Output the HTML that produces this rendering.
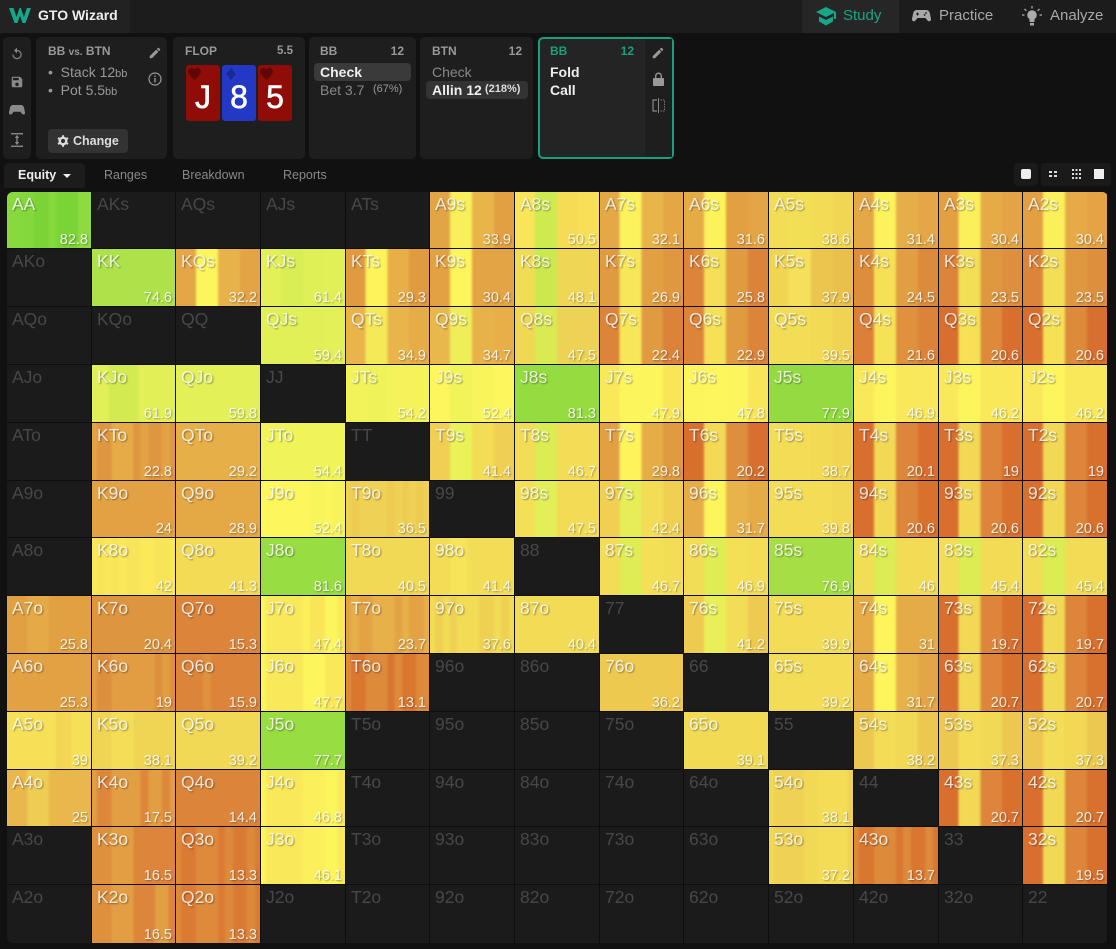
<!DOCTYPE html>
<html lang="en"><head><meta charset="utf-8"><title>GTO Wizard</title>
<style>
*{box-sizing:border-box}
html,body{margin:0;padding:0;background:#111;width:1116px;height:949px;overflow:hidden;font-family:"Liberation Sans",sans-serif}
.a{position:absolute}
.top{left:0;top:0;width:1116px;height:33px;background:#1c1c1c}
.p{position:absolute;top:37px;height:122px;background:#1e1e1e;border-radius:5px}
.t{position:absolute;white-space:nowrap;line-height:16px}
.h{font-size:12px;font-weight:bold;color:#999}
.g{display:grid;position:absolute;left:7px;top:192px;width:1101px;height:751px;background:#0e0e0e;border-radius:6px;overflow:hidden;gap:1px;
grid-template-columns:84px 83px 84px 84px 83px 84px 84px 83px 84px 84px 84px 83px 84px;
grid-template-rows:56px 57px 57px 57px 57px 56px 57px 57px 57px 57px 56px 57px 58px}
.g>div{position:relative;overflow:hidden}
.d{background:#1b1b1b;color:#474747;font-size:17.5px;line-height:18px;padding:3px 0 0 5px}
.c::before{content:"";position:absolute;inset:-2px;background:inherit;filter:blur(1px)}
.c span{position:absolute;left:5px;top:3px;font-size:17.5px;line-height:18px;color:rgba(255,255,255,.82);text-shadow:1px 1px 1.500px rgba(0,0,0,.38)}
.c em{position:absolute;right:3px;bottom:1.5px;font-style:normal;font-size:14.5px;line-height:14px;color:rgba(255,255,255,.86);text-shadow:1px 1px 1.500px rgba(0,0,0,.32)}
.s{background:linear-gradient(90deg,var(--a) 25%,var(--b) 25% 50%,var(--c) 50% 75%,var(--d) 75%)}
svg{position:absolute;display:block}
</style></head><body>
<div class="a top"></div>
<div class="a" style="left:0;top:0;width:130px;height:33px;background:#222"></div>
<svg style="left:9px;top:7px" width="22" height="17" viewBox="0 0 22 17"><path d="M0 1h4.500l3 9 3-9h1.400l3 9 3-9H22l-5.500 15h-3L11 8.500 8.500 16h-3z" fill="#17a688"/></svg>
<div class="t" style="left:38px;top:7px;font-size:14px;font-weight:bold;color:#eee">GTO Wizard</div>
<div class="a" style="left:802px;top:0;width:97px;height:33px;background:#262626"></div>
<svg style="left:815px;top:6px" width="22" height="21" viewBox="0 0 22 21"><path d="M11 1 1 6l10 5 8-4v6h2V6zM4 10.500v5l7 4 7-4v-5l-7 3.500z" fill="#17a688"/></svg>
<div class="t" style="left:843px;top:8px;font-size:15px;color:#17a688">Study</div>
<svg style="left:912px;top:7px" width="19" height="18" viewBox="0 0 19 18"><path d="M5 3h9c2.500 0 3.500 1.500 4 4l1 5c.3 2-2 3.200-3.500 1.500L13.500 11h-8L3.500 13.500C2 15.200-.3 14 0 12l1-5c.5-2.500 1.500-4 4-4z" fill="#a8a8a8"/><path d="M4 6.500h3v1H4zM5 5.500h1v3H5z" fill="#1c1c1c"/><circle cx="14" cy="6" r=".9" fill="#1c1c1c"/><circle cx="12.500" cy="8" r=".9" fill="#1c1c1c"/></svg>
<div class="t" style="left:939px;top:8px;font-size:15px;color:#a8a8a8">Practice</div>
<svg style="left:1022px;top:6px" width="20" height="22" viewBox="0 0 20 22"><circle cx="10" cy="9" r="4.800" fill="#aaa"/><path d="M7.500 13h5v3h-5zM8 17h4v2.500H8z" fill="#aaa"/><path d="M10 0v2.500M2.500 3l1.800 1.800M17.500 3l-1.800 1.800M0 9h2.500M17.500 9H20" stroke="#aaa" stroke-width="1.300"/></svg>
<div class="t" style="left:1050px;top:8px;font-size:15px;color:#a8a8a8">Analyze</div>

<div class="p" style="left:3px;width:28px"></div>
<svg style="left:10px;top:47px" width="14" height="14" viewBox="0 0 24 24"><path d="M12 5V1L7 6l5 5V7a6 6 0 1 1-6 6H4a8 8 0 1 0 8-8z" fill="#8a8a8a"/></svg>
<svg style="left:10px;top:75px" width="14" height="14" viewBox="0 0 24 24"><path d="M17 3H5a2 2 0 0 0-2 2v14a2 2 0 0 0 2 2h14a2 2 0 0 0 2-2V7zm-5 16a3 3 0 1 1 0-6 3 3 0 0 1 0 6zm3-10H5V5h10z" fill="#8a8a8a"/></svg>
<svg style="left:9px;top:104px" width="16" height="13" viewBox="0 0 19 15"><path d="M5 1h9c2.500 0 3.500 1.500 4 4l1 5c.3 2-2 3.200-3.500 1.500L13.500 9h-8L3.500 11.500C2 13.200-.3 12 0 10l1-5c.5-2.500 1.500-4 4-4z" fill="#8a8a8a"/></svg>
<svg style="left:10px;top:133px" width="14" height="14" viewBox="0 0 14 14"><path d="M1 .7h12M1 13.300h12M7 2.500v9" stroke="#8a8a8a" stroke-width="1.300" fill="none"/><path d="M7 2 4.800 5h4.400zM7 12 4.800 9h4.400z" fill="#8a8a8a"/></svg>

<div class="p" style="left:36px;width:131px"></div>
<div class="t h" style="left:48px;top:43px">BB <span style="font-size:10px">vs.</span> BTN</div>
<div class="t" style="left:48px;top:64px;font-size:14px;color:#999">•&nbsp; Stack 12<span style="font-size:11px">bb</span></div>
<div class="t" style="left:48px;top:82px;font-size:14px;color:#999">•&nbsp; Pot 5.5<span style="font-size:11px">bb</span></div>
<svg style="left:148px;top:46px" width="14" height="14" viewBox="0 0 24 24"><path d="M3 17.250V21h3.750L17.810 9.940l-3.750-3.750L3 17.250zM20.710 7.040a1 1 0 0 0 0-1.410l-2.340-2.340a1 1 0 0 0-1.410 0l-1.830 1.830 3.750 3.750 1.830-1.830z" fill="#999"/></svg>
<svg style="left:148px;top:72px" width="14" height="14" viewBox="0 0 14 14"><circle cx="7" cy="7" r="6" fill="none" stroke="#999" stroke-width="1.200"/><path d="M6.300 6h1.400v4.500H6.300zM6.300 3.500h1.400v1.400H6.300z" fill="#999"/></svg>
<div class="a" style="left:48px;top:129px;width:80px;height:24px;background:#333;border-radius:4px"></div>
<svg style="left:57px;top:135px" width="12" height="12" viewBox="0 0 12 12"><circle cx="6" cy="6" r="3.300" fill="none" stroke="#ddd" stroke-width="2.400"/><path d="M6 .3v2M6 9.700v2M1 3l1.700 1M9.300 8l1.700 1M1 9l1.700-1M9.300 4 11 3" stroke="#ddd" stroke-width="2"/></svg>
<div class="t" style="left:73px;top:133px;font-size:12.500px;font-weight:bold;color:#ddd">Change</div>

<div class="p" style="left:173px;width:132px"></div>
<div class="t h" style="left:185px;top:43px">FLOP</div>
<div class="t h" style="right:823px;top:43px;font-size:11.500px">5.5</div>
<div class="a" style="left:186px;top:65px;width:34px;height:56px;background:#8f0c07;border-radius:3px"></div>
<div class="a" style="left:222px;top:65px;width:34px;height:56px;background:#2338c4;border-radius:3px"></div>
<div class="a" style="left:258px;top:65px;width:34px;height:56px;background:#8f0c07;border-radius:3px"></div>
<svg style="left:188px;top:68px" width="13" height="12" viewBox="0 0 14 13"><path d="M7 13C3 9 0 6.500 0 3.500 0 1.500 1.500 0 3.500 0 5 0 6.300.8 7 2c.7-1.200 2-2 3.500-2C12.500 0 14 1.500 14 3.500 14 6.500 11 9 7 13z" fill="#5d0805"/></svg>
<svg style="left:226px;top:68px" width="10" height="12" viewBox="0 0 11 14"><path d="M5.500 0 11 7l-5.500 7L0 7z" fill="#18298f"/></svg>
<svg style="left:260px;top:68px" width="13" height="12" viewBox="0 0 14 13"><path d="M7 13C3 9 0 6.500 0 3.500 0 1.500 1.500 0 3.500 0 5 0 6.300.8 7 2c.7-1.200 2-2 3.500-2C12.500 0 14 1.500 14 3.500 14 6.500 11 9 7 13z" fill="#5d0805"/></svg>
<div class="t" style="left:186px;top:79px;width:34px;text-align:center;font-size:32px;line-height:36px;color:#fff;-webkit-text-stroke:.6px #fff">J</div>
<div class="t" style="left:222px;top:79px;width:34px;text-align:center;font-size:32px;line-height:36px;color:#fff;-webkit-text-stroke:.6px #fff">8</div>
<div class="t" style="left:258px;top:79px;width:34px;text-align:center;font-size:32px;line-height:36px;color:#fff;-webkit-text-stroke:.6px #fff">5</div>

<div class="p" style="left:309px;width:107px"></div>
<div class="t h" style="left:320px;top:43px">BB</div>
<div class="t h" style="right:712px;top:43px">12</div>
<div class="a" style="left:314px;top:63px;width:97px;height:18px;background:#3a3a3a;border-radius:4px"></div>
<div class="t" style="left:320px;top:64px;font-size:14px;font-weight:bold;color:#eee">Check</div>
<div class="t" style="left:320px;top:82px;font-size:14px;color:#888">Bet 3.7</div>
<div class="t" style="left:373px;top:81px;font-size:11px;color:#999">(67%)</div>

<div class="p" style="left:420px;width:113px"></div>
<div class="t h" style="left:432px;top:43px">BTN</div>
<div class="t h" style="right:594px;top:43px">12</div>
<div class="t" style="left:432px;top:64px;font-size:14px;color:#888">Check</div>
<div class="a" style="left:426px;top:81px;width:102px;height:18px;background:#333;border-radius:4px"></div>
<div class="t" style="left:432px;top:82px;font-size:14px;font-weight:bold;color:#eee">Allin 12</div>
<div class="t" style="left:485px;top:81px;font-size:11px;font-weight:bold;color:#ddd">(218%)</div>

<div class="p" style="left:538px;width:136px;background:#242424;border:2px solid #17a07d"></div>
<div class="a" style="left:645px;top:39px;width:27px;height:118px;background:#1e1e1e"></div>
<div class="t h" style="left:550px;top:43px;color:#17a07d">BB</div>
<div class="t h" style="right:482px;top:43px;color:#17a07d">12</div>
<div class="t" style="left:550px;top:64px;font-size:14px;font-weight:bold;color:#eee">Fold</div>
<div class="t" style="left:550px;top:82px;font-size:14px;font-weight:bold;color:#eee">Call</div>
<svg style="left:651px;top:46px" width="14" height="14" viewBox="0 0 24 24"><path d="M3 17.250V21h3.750L17.810 9.940l-3.750-3.750L3 17.250zM20.710 7.040a1 1 0 0 0 0-1.410l-2.340-2.340a1 1 0 0 0-1.410 0l-1.830 1.830 3.750 3.750 1.830-1.830z" fill="#999"/></svg>
<svg style="left:653px;top:72px" width="11" height="14" viewBox="0 0 11 14"><path d="M1 6h9a1 1 0 0 1 1 1v6a1 1 0 0 1-1 1H1a1 1 0 0 1-1-1V7a1 1 0 0 1 1-1z" fill="#999"/><path d="M2.700 6V4a2.800 2.800 0 0 1 5.600 0v2" fill="none" stroke="#999" stroke-width="1.300"/></svg>
<svg style="left:652px;top:98px" width="13" height="15" viewBox="0 0 13 15"><path d="M5 2H1v11h4" fill="none" stroke="#888" stroke-width="1.200"/><path d="M6.500 0v15" stroke="#888"/><path d="M8.500 2h4v11h-4" fill="none" stroke="#777" stroke-dasharray="1.500 1"/></svg>

<div class="a" style="left:4px;top:163px;width:81px;height:25px;background:#1c1c1c;border-radius:5px 5px 0 0"></div>
<div class="t" style="left:18px;top:167px;font-size:12.500px;font-weight:bold;color:#eee">Equity</div>
<div class="a" style="left:63px;top:174px;border:4px solid transparent;border-top:4px solid #eee;border-bottom:0"></div>
<div class="t" style="left:104px;top:167px;font-size:12.500px;color:#888">Ranges</div>
<div class="t" style="left:182px;top:167px;font-size:12.500px;color:#888">Breakdown</div>
<div class="t" style="left:283px;top:167px;font-size:12.500px;color:#888">Reports</div>
<div class="a" style="left:1014px;top:163px;width:24px;height:23px;background:#1a1a1a;border-radius:4px"></div>
<div class="a" style="left:1041px;top:163px;width:70px;height:23px;background:#1a1a1a;border-radius:4px"></div>
<div class="a" style="left:1021px;top:169px;width:10px;height:10px;background:#eee;border-radius:2px"></div>
<svg style="left:1049px;top:170px" width="8" height="8" viewBox="0 0 8 8"><path d="M0 1h3v2H0zM5 1h3v2H5zM0 5h3v2H0zM5 5h3v2H5z" fill="#ddd"/></svg>
<svg style="left:1072px;top:169px" width="9" height="10" viewBox="0 0 9 10"><path d="M0 0h2v2H0zM3.500 0h2v2h-2zM7 0h2v2H7zM0 4h2v2H0zM3.500 4h2v2h-2zM7 4h2v2H7zM0 8h2v2H0zM3.500 8h2v2h-2zM7 8h2v2H7z" fill="#ddd"/></svg>
<div class="a" style="left:1094px;top:169px;width:10px;height:10px;background:#eee"></div>

<div class="g">
<div class="c" style="background:linear-gradient(90deg,#88d93e 16%,#84d83b 16% 33%,#7ad436 33% 50%,#88d93e 50% 58%,#7bd436 58% 83%,#8ddb40 83%)"><span>AA</span><em>82.8</em></div>
<div class="d">AKs</div><div class="d">AQs</div><div class="d">AJs</div><div class="d">ATs</div>
<div class="c s" style="--a:#e2a545;--b:#f8ef5a;--c:#e8b54a;--d:#e2a043"><span>A9s</span><em>33.9</em></div>
<div class="c s" style="--a:#f8e55a;--b:#cfea50;--c:#f6dc55;--d:#f7e057"><span>A8s</span><em>50.5</em></div>
<div class="c s" style="--a:#e4a946;--b:#fcf25b;--c:#e9b54b;--d:#e5a645"><span>A7s</span><em>32.1</em></div>
<div class="c s" style="--a:#e5ab47;--b:#fcf25b;--c:#e3a042;--d:#e4a645"><span>A6s</span><em>31.6</em></div>
<div class="c s" style="--a:#f3dd56;--b:#f3df56;--c:#f2dc55;--d:#f1d653"><span>A5s</span><em>38.6</em></div>
<div class="c s" style="--a:#e4a846;--b:#fcf25b;--c:#e6ae48;--d:#e4a646"><span>A4s</span><em>31.4</em></div>
<div class="c s" style="--a:#e2a043;--b:#fbf05a;--c:#e6ab47;--d:#e4a344"><span>A3s</span><em>30.4</em></div>
<div class="c s" style="--a:#e2a043;--b:#fbf05a;--c:#e6ab47;--d:#e4a344"><span>A2s</span><em>30.4</em></div>

<div class="d">AKo</div>
<div class="c" style="background:#aee24a"><span>KK</span><em>74.6</em></div>
<div class="c s" style="--a:#e4a646;--b:#fdf55c;--c:#e8b24a;--d:#e4a344"><span>KQs</span><em>32.2</em></div>
<div class="c s" style="--a:#e4f058;--b:#d9ee54;--c:#dff057;--d:#e2f057"><span>KJs</span><em>61.4</em></div>
<div class="c s" style="--a:#e09a40;--b:#fdf45b;--c:#e8ae48;--d:#e09a40"><span>KTs</span><em>29.3</em></div>
<div class="c s" style="--a:#e2a243;--b:#fdf55c;--c:#e3a443;--d:#e3a443"><span>K9s</span><em>30.4</em></div>
<div class="c s" style="--a:#f0dc55;--b:#cbe94f;--c:#efd755;--d:#efd755"><span>K8s</span><em>48.1</em></div>
<div class="c s" style="--a:#e09a40;--b:#f7e658;--c:#e3a043;--d:#df983f"><span>K7s</span><em>26.9</em></div>
<div class="c s" style="--a:#dc853a;--b:#f4df56;--c:#e09a40;--d:#db8338"><span>K6s</span><em>25.8</em></div>
<div class="c s" style="--a:#f0d553;--b:#f4e05a;--c:#ebc54e;--d:#eac04d"><span>K5s</span><em>37.9</em></div>
<div class="c s" style="--a:#dd8e3c;--b:#f6e056;--c:#e29e42;--d:#dc8a3b"><span>K4s</span><em>24.5</em></div>
<div class="c s" style="--a:#dc853a;--b:#f3df56;--c:#e09840;--d:#de8f3d"><span>K3s</span><em>23.5</em></div>
<div class="c s" style="--a:#dc853a;--b:#f3df56;--c:#e09840;--d:#de8f3d"><span>K2s</span><em>23.5</em></div>

<div class="d">AQo</div><div class="d">KQo</div><div class="d">QQ</div>
<div class="c s" style="--a:#e2f057;--b:#e0f057;--c:#e2ef56;--d:#e4f058"><span>QJs</span><em>59.4</em></div>
<div class="c s" style="--a:#e9b54b;--b:#f4ea58;--c:#e9b54b;--d:#e6ac47"><span>QTs</span><em>34.9</em></div>
<div class="c s" style="--a:#e9b84c;--b:#f0ee58;--c:#e8b24a;--d:#e8ae48"><span>Q9s</span><em>34.7</em></div>
<div class="c s" style="--a:#f0d754;--b:#d9ea52;--c:#edd253;--d:#edd253"><span>Q8s</span><em>47.5</em></div>
<div class="c s" style="--a:#dc853a;--b:#f7e658;--c:#e09a40;--d:#db8338"><span>Q7s</span><em>22.4</em></div>
<div class="c s" style="--a:#dc853a;--b:#f5e056;--c:#e09a40;--d:#dc843a"><span>Q6s</span><em>22.9</em></div>
<div class="c s" style="--a:#f3dc56;--b:#f3dc56;--c:#f2da55;--d:#f0d353"><span>Q5s</span><em>39.5</em></div>
<div class="c s" style="--a:#dc8039;--b:#f6e257;--c:#df913e;--d:#dc8339"><span>Q4s</span><em>21.6</em></div>
<div class="c s" style="--a:#d96f2e;--b:#f5e056;--c:#dd8a3b;--d:#d96f2e"><span>Q3s</span><em>20.6</em></div>
<div class="c s" style="--a:#d96f2e;--b:#f5e056;--c:#dd8a3b;--d:#d96f2e"><span>Q2s</span><em>20.6</em></div>

<div class="d">AJo</div>
<div class="c" style="background:linear-gradient(90deg,#e2f057 22%,#d3ea51 22% 55%,#e2ef56 55%)"><span>KJo</span><em>61.9</em></div>
<div class="c" style="background:#e3f058"><span>QJo</span><em>59.8</em></div>
<div class="d">JJ</div>
<div class="c s" style="--a:#f3f359;--b:#f0f358;--c:#f4f45a;--d:#f4f45a"><span>JTs</span><em>54.2</em></div>
<div class="c s" style="--a:#fdf75d;--b:#f2f359;--c:#f8f45b;--d:#fdf75d"><span>J9s</span><em>52.4</em></div>
<div class="c" style="background:#94dc40"><span>J8s</span><em>81.3</em></div>
<div class="c s" style="--a:#f8e85a;--b:#fdf55c;--c:#fdf55c;--d:#f8e658"><span>J7s</span><em>47.9</em></div>
<div class="c s" style="--a:#fdf55c;--b:#fdf75d;--c:#fdf55c;--d:#f8e658"><span>J6s</span><em>47.8</em></div>
<div class="c" style="background:#93db40"><span>J5s</span><em>77.9</em></div>
<div class="c s" style="--a:#f8e85a;--b:#fdf55c;--c:#f8e85a;--d:#f8e85a"><span>J4s</span><em>46.9</em></div>
<div class="c s" style="--a:#f8e85a;--b:#fdf55c;--c:#f8e85a;--d:#f8e85a"><span>J3s</span><em>46.2</em></div>
<div class="c s" style="--a:#f8e85a;--b:#fdf55c;--c:#f8e85a;--d:#f8e85a"><span>J2s</span><em>46.2</em></div>

<div class="d">ATo</div>
<div class="c" style="background:linear-gradient(90deg,#e3a345 8%,#df9640 8% 25%,#e6ab47 25% 50%,#df9640 50% 58%,#e3a345 58% 67%,#df9640 67% 83%,#e3a345 83% 92%,#df9640 92%)"><span>KTo</span><em>22.8</em></div>
<div class="c" style="background:#e7af48"><span>QTo</span><em>29.2</em></div>
<div class="c" style="background:#f0f459"><span>JTo</span><em>54.4</em></div>
<div class="d">TT</div>
<div class="c s" style="--a:#f0cf52;--b:#ebf257;--c:#f3dc56;--d:#f0d052"><span>T9s</span><em>41.4</em></div>
<div class="c s" style="--a:#f3dc56;--b:#dcec53;--c:#f3dc56;--d:#f3dc56"><span>T8s</span><em>46.7</em></div>
<div class="c s" style="--a:#e2a043;--b:#fdf45b;--c:#e6ad47;--d:#e09a40"><span>T7s</span><em>29.8</em></div>
<div class="c s" style="--a:#d96f2e;--b:#f4d955;--c:#df8e3d;--d:#d96f2e"><span>T6s</span><em>20.2</em></div>
<div class="c s" style="--a:#f3dc56;--b:#f3dc56;--c:#f2da55;--d:#f1d653"><span>T5s</span><em>38.7</em></div>
<div class="c s" style="--a:#d96f2e;--b:#f1d855;--c:#dd853a;--d:#d96f2e"><span>T4s</span><em>20.1</em></div>
<div class="c s" style="--a:#d96f2e;--b:#f1d855;--c:#dd853a;--d:#d96f2e"><span>T3s</span><em>19</em></div>
<div class="c s" style="--a:#d96f2e;--b:#f1d855;--c:#dd853a;--d:#d96f2e"><span>T2s</span><em>19</em></div>

<div class="d">A9o</div>
<div class="c" style="background:#e2a243"><span>K9o</span><em>24</em></div>
<div class="c" style="background:#e4a845"><span>Q9o</span><em>28.9</em></div>
<div class="c" style="background:linear-gradient(90deg,#fdf75d 58%,#f7f55b 58% 75%,#fbf65c 75% 83%,#f6f45a 83%)"><span>J9o</span><em>52.4</em></div>
<div class="c" style="background:linear-gradient(90deg,#efd254 8%,#edcb51 8% 17%,#efd254 17% 50%,#edcb51 50% 58%,#efd254 58% 67%,#edcb51 67% 75%,#efd254 75% 83%,#edcb51 83% 92%,#efd254 92%)"><span>T9o</span><em>36.5</em></div>
<div class="d">99</div>
<div class="c s" style="--a:#f3e056;--b:#e2ef56;--c:#f2dc55;--d:#f2dc55"><span>98s</span><em>47.5</em></div>
<div class="c s" style="--a:#f0cf52;--b:#e6ed56;--c:#f3dc56;--d:#f0d052"><span>97s</span><em>42.4</em></div>
<div class="c s" style="--a:#e5ac47;--b:#fdf55c;--c:#e8b34a;--d:#e5ab47"><span>96s</span><em>31.7</em></div>
<div class="c s" style="--a:#f3dc56;--b:#f3dc56;--c:#f3dc56;--d:#f1d855"><span>95s</span><em>39.8</em></div>
<div class="c s" style="--a:#d96f2e;--b:#f2d955;--c:#dd853a;--d:#d8702e"><span>94s</span><em>20.6</em></div>
<div class="c s" style="--a:#d96f2e;--b:#f2d955;--c:#dd853a;--d:#d8702e"><span>93s</span><em>20.6</em></div>
<div class="c s" style="--a:#d96f2e;--b:#f2d955;--c:#dd853a;--d:#d8702e"><span>92s</span><em>20.6</em></div>

<div class="d">A8o</div>
<div class="c" style="background:linear-gradient(90deg,#fbe95a 8%,#f8e458 8% 17%,#fbe95a 17% 25%,#f8e458 25% 33%,#fbe95a 33% 42%,#f8e458 42% 58%,#fbe95a 58% 75%,#f8e458 75% 92%,#fbe95a 92%)"><span>K8o</span><em>42</em></div>
<div class="c" style="background:#f3db55"><span>Q8o</span><em>41.3</em></div>
<div class="c" style="background:#98dd41"><span>J8o</span><em>81.6</em></div>
<div class="c" style="background:#f1d855"><span>T8o</span><em>40.5</em></div>
<div class="c" style="background:linear-gradient(90deg,#f3dc56 25%,#f7e458 25% 45%,#f3dc56 45%)"><span>98o</span><em>41.4</em></div>
<div class="d">88</div>
<div class="c s" style="--a:#f3dc56;--b:#dfec54;--c:#f3e056;--d:#f3dc56"><span>87s</span><em>46.7</em></div>
<div class="c s" style="--a:#f3dc56;--b:#dfec54;--c:#f3e056;--d:#f3dc56"><span>86s</span><em>46.9</em></div>
<div class="c" style="background:#a6de46"><span>85s</span><em>76.9</em></div>
<div class="c s" style="--a:#f2de56;--b:#dcec53;--c:#f2dc55;--d:#f2dc55"><span>84s</span><em>46</em></div>
<div class="c s" style="--a:#f2de56;--b:#dcec53;--c:#f2dc55;--d:#f2dc55"><span>83s</span><em>45.4</em></div>
<div class="c s" style="--a:#f2de56;--b:#dcec53;--c:#f2dc55;--d:#f2dc55"><span>82s</span><em>45.4</em></div>

<div class="c" style="background:linear-gradient(90deg,#e1a042 25%,#e5aa46 25% 50%,#e1a042 50%)"><span>A7o</span><em>25.8</em></div>
<div class="c" style="background:#de953f"><span>K7o</span><em>20.4</em></div>
<div class="c" style="background:#dc843a"><span>Q7o</span><em>15.3</em></div>
<div class="c" style="background:linear-gradient(90deg,#fdf45b 8%,#f9e95a 8% 50%,#fbf05b 50% 58%,#f8e658 58% 75%,#fdf55c 75% 90%,#f9e95a 90%)"><span>J7o</span><em>47.4</em></div>
<div class="c" style="background:linear-gradient(90deg,#e3a345 8%,#e7b049 8% 17%,#e3a345 17% 33%,#e7b049 33% 58%,#e3a345 58% 67%,#e7b049 67% 75%,#e3a345 75% 92%,#e7b049 92%)"><span>T7o</span><em>23.7</em></div>
<div class="c" style="background:linear-gradient(90deg,#f2db55 8%,#eed052 8% 17%,#f2db55 17% 25%,#eed052 25% 33%,#f2db55 33% 58%,#eed052 58% 75%,#f2db55 75% 83%,#eed052 83% 92%,#f2db55 92%)"><span>97o</span><em>37.6</em></div>
<div class="c" style="background:#f2db55"><span>87o</span><em>40.4</em></div>
<div class="d">77</div>
<div class="c s" style="--a:#eecb50;--b:#e8ef57;--c:#f3dc56;--d:#eecb50"><span>76s</span><em>41.2</em></div>
<div class="c" style="background:#f3dc56"><span>75s</span><em>39.9</em></div>
<div class="c s" style="--a:#e5ab47;--b:#fdf55c;--c:#e5ab47;--d:#e5ab47"><span>74s</span><em>31</em></div>
<div class="c s" style="--a:#d96f2e;--b:#f1d855;--c:#dd853a;--d:#d8702e"><span>73s</span><em>19.7</em></div>
<div class="c s" style="--a:#d96f2e;--b:#f1d855;--c:#dd853a;--d:#d8702e"><span>72s</span><em>19.7</em></div>

<div class="c" style="background:#e2a243"><span>A6o</span><em>25.3</em></div>
<div class="c" style="background:linear-gradient(90deg,#e29d42 8%,#de8f3d 8% 25%,#e29d42 25% 75%,#de8f3d 75% 83%,#e29d42 83% 92%,#de8f3d 92%)"><span>K6o</span><em>19</em></div>
<div class="c" style="background:linear-gradient(90deg,#dc853a 33%,#df913e 33% 42%,#dc853a 42%)"><span>Q6o</span><em>15.9</em></div>
<div class="c" style="background:linear-gradient(90deg,#fdf45b 8%,#f9e95a 8% 50%,#fdf55c 50% 75%,#f9e95a 75%)"><span>J6o</span><em>47.7</em></div>
<div class="c" style="background:linear-gradient(90deg,#dd8a3b 8%,#d9762f 8% 25%,#dd8a3b 25% 50%,#d9762f 50% 58%,#dd8a3b 58% 67%,#d9762f 67% 83%,#dd8a3b 83%)"><span>T6o</span><em>13.1</em></div>
<div class="d">96o</div><div class="d">86o</div>
<div class="c" style="background:#edc950"><span>76o</span><em>36.2</em></div>
<div class="d">66</div>
<div class="c" style="background:#f3dc56"><span>65s</span><em>39.2</em></div>
<div class="c s" style="--a:#e5ab47;--b:#fdf55c;--c:#e8b24a;--d:#e4a546"><span>64s</span><em>31.7</em></div>
<div class="c s" style="--a:#d96f2e;--b:#f1d855;--c:#dd853a;--d:#d8702e"><span>63s</span><em>20.7</em></div>
<div class="c s" style="--a:#d96f2e;--b:#f1d855;--c:#dd853a;--d:#d8702e"><span>62s</span><em>20.7</em></div>

<div class="c" style="background:linear-gradient(90deg,#f6e057 58%,#f2d654 58% 75%,#f6e057 75%)"><span>A5o</span><em>39</em></div>
<div class="c" style="background:linear-gradient(90deg,#f0d554 25%,#f4de57 25% 50%,#f0d554 50%)"><span>K5o</span><em>38.1</em></div>
<div class="c" style="background:#f1d855"><span>Q5o</span><em>39.2</em></div>
<div class="c" style="background:#98dd41"><span>J5o</span><em>77.7</em></div>
<div class="d">T5o</div><div class="d">95o</div><div class="d">85o</div><div class="d">75o</div>
<div class="c" style="background:#f1db55"><span>65o</span><em>39.1</em></div>
<div class="d">55</div>
<div class="c s" style="--a:#ecc850;--b:#f3dc56;--c:#f1d855;--d:#ecc850"><span>54s</span><em>38.2</em></div>
<div class="c s" style="--a:#ecc850;--b:#f3dc56;--c:#f1d855;--d:#ecc850"><span>53s</span><em>37.3</em></div>
<div class="c s" style="--a:#ecc850;--b:#f3dc56;--c:#f1d855;--d:#ecc850"><span>52s</span><em>37.3</em></div>

<div class="c" style="background:linear-gradient(90deg,#e9b74b 25%,#efcc52 25% 50%,#e9b74b 50%)"><span>A4o</span><em>25</em></div>
<div class="c" style="background:linear-gradient(90deg,#e29e42 8%,#dd873b 8% 25%,#e29e42 25% 58%,#dd873b 58% 67%,#e29e42 67% 83%,#dd873b 83% 92%,#e29e42 92%)"><span>K4o</span><em>17.5</em></div>
<div class="c" style="background:#db853a"><span>Q4o</span><em>14.4</em></div>
<div class="c" style="background:linear-gradient(90deg,#fdf55c 8%,#f9e95a 8% 50%,#fbf05b 50% 75%,#fdf55c 75% 90%,#f9e95a 90%)"><span>J4o</span><em>46.8</em></div>
<div class="d">T4o</div><div class="d">94o</div><div class="d">84o</div><div class="d">74o</div><div class="d">64o</div>
<div class="c" style="background:linear-gradient(90deg,#f1d855 8%,#efd254 8% 42%,#f1d855 42% 58%,#f3dc56 58% 92%,#efd254 92%)"><span>54o</span><em>38.1</em></div>
<div class="d">44</div>
<div class="c s" style="--a:#d96f2e;--b:#f1d855;--c:#dd853a;--d:#d8702e"><span>43s</span><em>20.7</em></div>
<div class="c s" style="--a:#d96f2e;--b:#f1d855;--c:#dd853a;--d:#d8702e"><span>42s</span><em>20.7</em></div>

<div class="d">A3o</div>
<div class="c" style="background:linear-gradient(90deg,#de903d 25%,#e29e42 25% 50%,#dd853a 50%)"><span>K3o</span><em>16.5</em></div>
<div class="c" style="background:linear-gradient(90deg,#dd8a3b 8%,#da7a33 8% 25%,#dd8a3b 25% 50%,#da7a33 50% 58%,#dd8a3b 58% 67%,#da7a33 67% 83%,#dd8a3b 83% 92%,#da7a33 92%)"><span>Q3o</span><em>13.3</em></div>
<div class="c" style="background:linear-gradient(90deg,#fdf55c 8%,#f9e95a 8% 50%,#fbf05b 50% 75%,#fdf55c 75% 90%,#f9e95a 90%)"><span>J3o</span><em>46.1</em></div>
<div class="d">T3o</div><div class="d">93o</div><div class="d">83o</div><div class="d">73o</div><div class="d">63o</div>
<div class="c" style="background:linear-gradient(90deg,#f1d855 8%,#efd254 8% 42%,#f1d855 42% 58%,#f3dc56 58% 92%,#efd254 92%)"><span>53o</span><em>37.2</em></div>
<div class="c" style="background:linear-gradient(90deg,#dd8a3b 8%,#d9762f 8% 25%,#dd8a3b 25% 50%,#d9762f 50% 58%,#dd8a3b 58% 67%,#d9762f 67% 83%,#dd8a3b 83% 92%,#d9762f 92%)"><span>43o</span><em>13.7</em></div>
<div class="d">33</div>
<div class="c s" style="--a:#d96f2e;--b:#f1d855;--c:#dd853a;--d:#d8702e"><span>32s</span><em>19.5</em></div>

<div class="d">A2o</div>
<div class="c" style="background:linear-gradient(90deg,#de903d 25%,#e29e42 25% 50%,#dd853a 50% 75%,#e29e42 75% 90%,#dd853a 90%)"><span>K2o</span><em>16.5</em></div>
<div class="c" style="background:linear-gradient(90deg,#dd8a3b 8%,#da7a33 8% 25%,#dd8a3b 25% 50%,#da7a33 50% 58%,#dd8a3b 58% 67%,#da7a33 67% 83%,#dd8a3b 83% 92%,#da7a33 92%)"><span>Q2o</span><em>13.3</em></div>
<div class="d">J2o</div><div class="d">T2o</div><div class="d">92o</div><div class="d">82o</div><div class="d">72o</div><div class="d">62o</div><div class="d">52o</div><div class="d">42o</div><div class="d">32o</div><div class="d">22</div>
</div>
</body></html>
